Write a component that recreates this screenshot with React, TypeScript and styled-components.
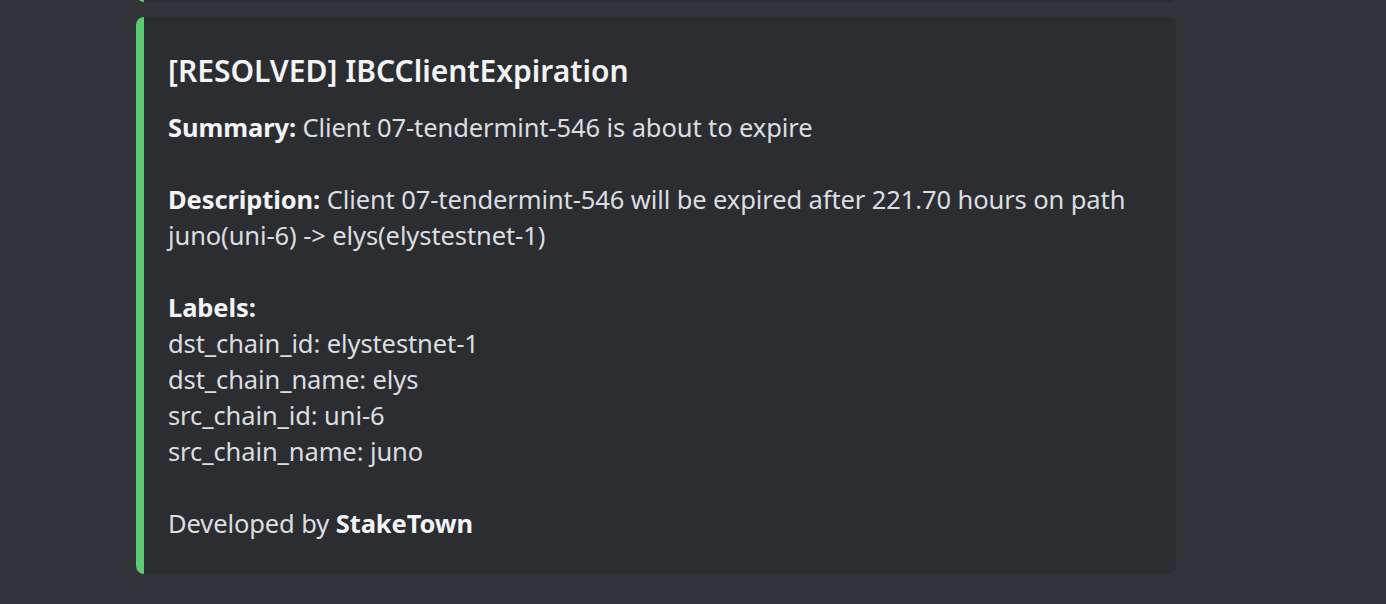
import React from 'react';
import styled, { createGlobalStyle } from 'styled-components';

const GlobalStyle = createGlobalStyle`
  html, body {
    margin: 0;
    padding: 0;
    background: #313338;
  }
  body {
    font-family: "Noto Sans", "Open Sans", sans-serif;
    -webkit-font-smoothing: antialiased;
  }
`;

type LabelRow = { key: string; value: string };

const labels: LabelRow[] = [
  { key: 'dst_chain_id', value: 'elystestnet-1' },
  { key: 'dst_chain_name', value: 'elys' },
  { key: 'src_chain_id', value: 'uni-6' },
  { key: 'src_chain_name', value: 'juno' },
];

export default function App() {
  return (
    <>
      <GlobalStyle />
      <Page>
        <PrevEmbed />
        <Embed>
          <Title>[RESOLVED] IBCClientExpiration</Title>
          <Description>
            <Line>
              <Strong>Summary:</Strong> Client 07-tendermint-546 is about to expire
            </Line>
            <Blank />
            <Line>
              <Strong>Description:</Strong> Client 07-tendermint-546 will be expired after
              221.70 hours on path juno(uni-6) -&gt; elys(elystestnet-1)
            </Line>
            <Blank />
            <Line>
              <Strong>Labels:</Strong>
            </Line>
            {labels.map((l) => (
              <Line key={l.key}>
                {l.key}: {l.value}
              </Line>
            ))}
            <Blank />
            <Line>
              Developed by <Strong>StakeTown</Strong>
            </Line>
          </Description>
        </Embed>
      </Page>
    </>
  );
}

const Page = styled.div`
  width: 1386px;
  height: 604px;
  overflow: hidden;
  box-sizing: border-box;
  padding-left: 136px;
  display: flex;
  flex-direction: column;
  gap: 15px;
`;

const PrevEmbed = styled.div`
  width: 1040px;
  height: 42px;
  margin-top: -40px;
  box-sizing: border-box;
  background: #2b2d31;
  border-left: 8px solid #5cc974;
  border-radius: 8px;
`;

const Embed = styled.div`
  width: 1040px;
  box-sizing: border-box;
  background: #2b2d31;
  border-left: 8px solid #5cc974;
  border-radius: 8px;
  padding: 32px 32px 33px 24px;
  display: flex;
  flex-direction: column;
  gap: 16px;
`;

const Title = styled.div`
  color: #f2f3f5;
  font-size: 30px;
  font-weight: 600;
  line-height: 44px;
  letter-spacing: 0;
`;

const Description = styled.div`
  color: #dbdee1;
  font-size: 25.5px;
  line-height: 36px;
  letter-spacing: -0.1px;
`;

const Line = styled.div`
  min-height: 36px;
`;

const Blank = styled.div`
  height: 36px;
`;

const Strong = styled.strong`
  font-weight: 700;
  color: #f2f3f5;
`;
